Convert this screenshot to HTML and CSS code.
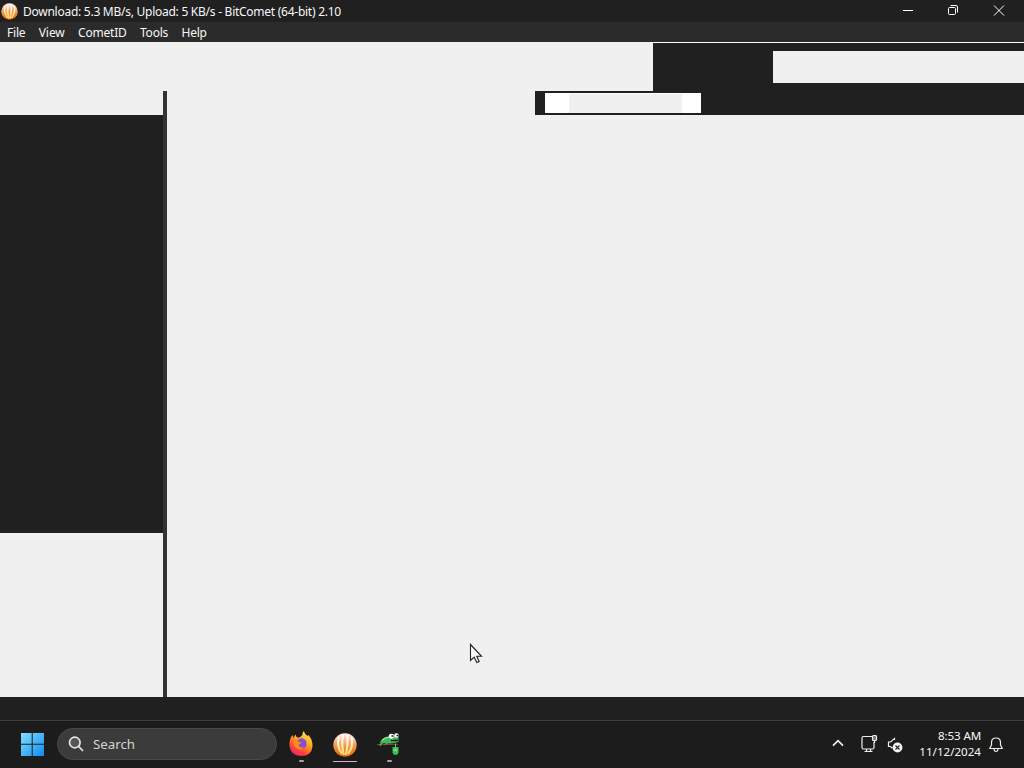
FILE: index.html
```html
<!DOCTYPE html>
<html lang="en">
<head>
<meta charset="utf-8">
<title>BitComet</title>
<link rel="stylesheet" href="styles.css">
</head>
<body>
<svg class="defs" width="0" height="0" aria-hidden="true">
  <defs>
    <linearGradient id="shell" x1="0" y1="0" x2="0" y2="1"><stop offset="0" stop-color="#fff1ee"/><stop offset=".35" stop-color="#f2b08a"/><stop offset=".7" stop-color="#ef8720"/><stop offset="1" stop-color="#e7600c"/></linearGradient>
    <linearGradient id="rib" x1="0" y1="0" x2="0" y2="1"><stop offset="0" stop-color="#ffffff"/><stop offset="1" stop-color="#ffd66d"/></linearGradient>
    <linearGradient id="win" x1="0" y1="0" x2="1" y2="1"><stop offset="0" stop-color="#82deff"/><stop offset="1" stop-color="#0d8cf0"/></linearGradient>
    <linearGradient id="fire" x1=".8" y1="0" x2=".25" y2="1"><stop offset="0" stop-color="#fff04b"/><stop offset=".45" stop-color="#ff9a22"/><stop offset=".75" stop-color="#ff4438"/><stop offset="1" stop-color="#e92368"/></linearGradient>
    <symbol id="comet" viewBox="0 0 24 24">
      <circle cx="12" cy="12" r="11.7" fill="url(#shell)"/>
      <path d="M9 21Q3 13 6 4M11 22Q8 12 10 2M13 22Q15 12 14.500 2M15 21Q21 13 18.500 4" fill="none" stroke="url(#rib)" stroke-width="2.200"/>
    </symbol>
  </defs>
</svg>
<div class="screen">
  <header class="titlebar">
    <svg class="app-icon" width="17" height="17"><use href="#comet"/></svg>
    <span class="title">Download: 5.3 MB/s, Upload: 5 KB/s - BitComet (64-bit) 2.10</span>
    <svg class="caption" width="136" height="22" viewBox="0 0 136 22" fill="none" stroke="#fff">
      <path d="M15 10.500h10"/>
      <rect x="60.500" y="7.500" width="7" height="7" rx="1"/><path d="M62.500 5.500h5.500q1.500 0 1.500 1.500v5.500"/>
      <path d="M106 5.500l10 10M116 5.500l-10 10"/>
    </svg>
  </header>
  <nav class="menu">
    <span>File</span><span class="m-view">View</span><span>CometID</span><span>Tools</span><span>Help</span>
  </nav>
  <section class="toolbar"><div class="toolbar-end"><div class="toolbar-box"></div></div></section>
  <main class="panes">
    <aside class="sidebar"><div class="tree"></div></aside>
    <div class="splitter"></div>
    <section class="content">
      <div class="filter"><div class="field"><div class="field-text"></div></div></div>
    </section>
  </main>
  <div class="status"></div>
  <footer class="taskbar">
    <svg class="start" width="24" height="24" viewBox="0 0 24 24"><path d="M1 1h10.700v10.700H1zM12.700 1H24v10.700H12.700zM1 12.700h10.700V24H1zM12.700 12.700H24V24H12.700z" fill="url(#win)"/></svg>
    <div class="search">
      <svg width="16" height="16" viewBox="0 0 16 16" fill="none" stroke="#e4e4e4" stroke-width="1.700"><circle cx="6.800" cy="6.500" r="5.300" fill="#555"/><path d="M10.600 10.300l4 4.200" stroke-linecap="round"/></svg>
      <span>Search</span>
    </div>
    <div class="apps">
      <div class="app"><svg width="24" height="26" viewBox="0 0 24 26">
        <path d="M1 9q1-4 2.500-5l.8 3 2-3.500q.8 2.500 3 3.200 2.500-.7 4-2.700 0-2.500 1.500-4 .8 3 3.700 5l.8-1Q24 9 23.500 15.500 22.500 25 12 25 1.500 24.500.5 15 .3 11 1 9z" fill="url(#fire)"/>
        <path d="M9 9q4-3.500 7.500 0 2.500 5-1 8-4 2-7-1.500Q7 11.500 9 9z" fill="#8052cc"/><path d="M4 11q4-3 6 0l3 .6-3 2q-1 3.500 5 3-5 4-9-.5Q4.500 14 4 11z" fill="#ff8a20"/></svg><i class="dot"></i></div>
      <div class="app"><svg width="24" height="26" viewBox="0 0 24 26"><use href="#comet" y="2" width="24" height="24"/></svg><i class="dot active"></i></div>
      <div class="app"><svg width="24" height="26" viewBox="0 0 24 26">
        <path d="M0 13.500h21" stroke="#913832" stroke-width="1"/>
        <path d="M3 11.500q2-5.500 8-6l3-2 7.500 3v4.500l-5 1.200-3 .3-3 0-3 2 1-2.500-3 .5-2 2.500-1.500-.5 1.500-2z" fill="#42b45c"/>
        <path d="M5 9.500q4-4 8-3l3 2" fill="none" stroke="#b5f0ad"/>
        <ellipse cx="14.500" cy="5" rx="2.700" ry="2.300" fill="#fff"/><ellipse cx="19.500" cy="4.500" rx="2.300" ry="2.300" fill="#fff"/><path d="M14.500 5h2M19.500 4.500h2M14 9.500h7" stroke="#182018" stroke-width="1.300"/>
        <path d="M15.500 16h6v5.500q-.5 2.500-3 2.500t-3-2.500z" fill="#35bf4d"/><path d="M17 18h3v2h-3zM18.500 12.500v3.500" fill="#a8f3a0" stroke="#62ce68"/></svg><i class="dot"></i></div>
    </div>
    <div class="tray">
      <svg width="86" height="30" viewBox="0 0 86 30" fill="none" stroke="#eee" stroke-width="1.200">
        <path d="M7 17.700l5-5 5 5" stroke-width="1.700"/>
        <path d="M46 8.500H37.500q-1.500 0-1.500 1.500v9.500q0 1.500 1.500 1.500h9q1.500 0 1.500-1.500V14M38.500 23.500h8M40.500 21v2.500M44.500 21v2.500"/>
        <rect x="46.500" y="7.500" width="4" height="5" rx="1" fill="#777"/><path d="M48.500 12.500V15"/>
        <path d="M68.500 12V10.500l-4 3.500H62.500v4.500h2l2 1.800"/><circle cx="71.500" cy="19.500" r="4.900" fill="#f4f4f4" stroke="none"/><path d="M69.500 17.500l4 4M73.500 17.500l-4 4" stroke="#222" stroke-width="1.100"/>
      </svg>
      <div class="clock"><span class="time">8:53 AM</span><span class="date">11/12/2024</span></div>
      <svg class="bell" width="14" height="16" viewBox="0 0 14 16" fill="none" stroke="#eee" stroke-width="1.200"><path d="M2.500 8V5.500Q2.500 1 7 1t4.500 4.500V8l1.800 3.500H.7zM5 12q.2 2.500 2 2.500T9 12" stroke-linejoin="round"/></svg>
    </div>
  </footer>
  <svg class="pointer" width="14" height="22" viewBox="0 0 14 22"><path d="M1.500 1.500v16l3.700-3.300 2.600 5.300 2.400-1.100-2.500-5.100h4.800z" fill="#fff" stroke="#20202a" stroke-width="1.100"/></svg>
</div>
</body>
</html>
```
FILE: styles.css
```css
* { box-sizing: border-box; }
body { margin: 0; font-family: "Noto Sans", "Open Sans", sans-serif; font-size: 12px; color: #f7f7f7; }
.defs { position: absolute; }
.screen { position: relative; width: 1024px; height: 768px; overflow: hidden; display: flex; flex-direction: column; background: #f0f0f0; }
.titlebar { height: 22px; flex: none; display: flex; align-items: center; background: #202020; white-space: nowrap; }
.app-icon { margin: 0 5px 0 1px; }
.title { font-size: 12px; letter-spacing: -0.26px; padding-top: 1px; }
.caption { margin-left: auto; margin-right: 0; flex: none; width: 136px; }
.menu { height: 20px; flex: none; display: flex; align-items: center; padding: 1px 0 0 7px; gap: 13.3px; background: #2b2b2b; letter-spacing: -0.2px; }
.m-view { letter-spacing: -0.05px; }
.toolbar { height: 49px; flex: none; display: flex; justify-content: flex-end; }
.toolbar-end { width: 371px; background: #202020; border-top: 1px solid #fff; display: flex; justify-content: flex-end; padding-top: 8px; }
.toolbar-box { width: 251px; height: 32px; background: #f0f0f0; }
.panes { height: 606px; flex: none; display: flex; }
.sidebar { width: 163px; padding-top: 24px; }
.tree { height: 418px; background: #202020; }
.splitter { width: 4px; background: #333; }
.content { flex: 1; display: flex; justify-content: flex-end; align-items: flex-start; }
.filter { width: 489px; height: 24px; background: #202020; padding: 2px 0 0 10px; }
.field { width: 156px; height: 20px; padding: 1px 19px 0 24px; background: #fff; }
.field-text { height: 19px; background: #f0f0f0; }
.status { height: 23px; flex: none; background: #202020; }
.taskbar { height: 48px; flex: none; display: flex; background: #1c1c1c; border-top: 1px solid #3d3d3d; }
.start { margin: 11px 13px 0 20px; flex: none; }
.search { width: 220px; height: 32px; margin-top: 7px; border-radius: 16px; border: 1px solid #484848; background: #3b3b3b; display: flex; align-items: center; padding-left: 10px; gap: 9px; color: #d3d3d3; font-size: 13.3px; }
.apps { display: flex; gap: 20px; margin: 10px 0 0 12px; }
.app { width: 24px; display: flex; flex-direction: column; align-items: center; }
.dot { width: 5px; height: 2px; margin-top: 3px; border-radius: 1px; background: #a5a5a5; }
.dot.active { width: 24px; height: 1px; margin-top: 4px; background: #d8b4b8; }
.tray { margin-left: auto; display: flex; padding-right: 21px; }
.tray > svg { margin-top: 7px; flex: none; }
.clock { width: 69px; margin: 7px 8px 0 0; display: flex; flex-direction: column; align-items: flex-end; font-size: 11.6px; line-height: 16px; white-space: nowrap; }
.time { letter-spacing: -0.15px; }
.tray > .bell { margin-top: 16px; }
.pointer { position: absolute; left: 469px; top: 643px; }
```
